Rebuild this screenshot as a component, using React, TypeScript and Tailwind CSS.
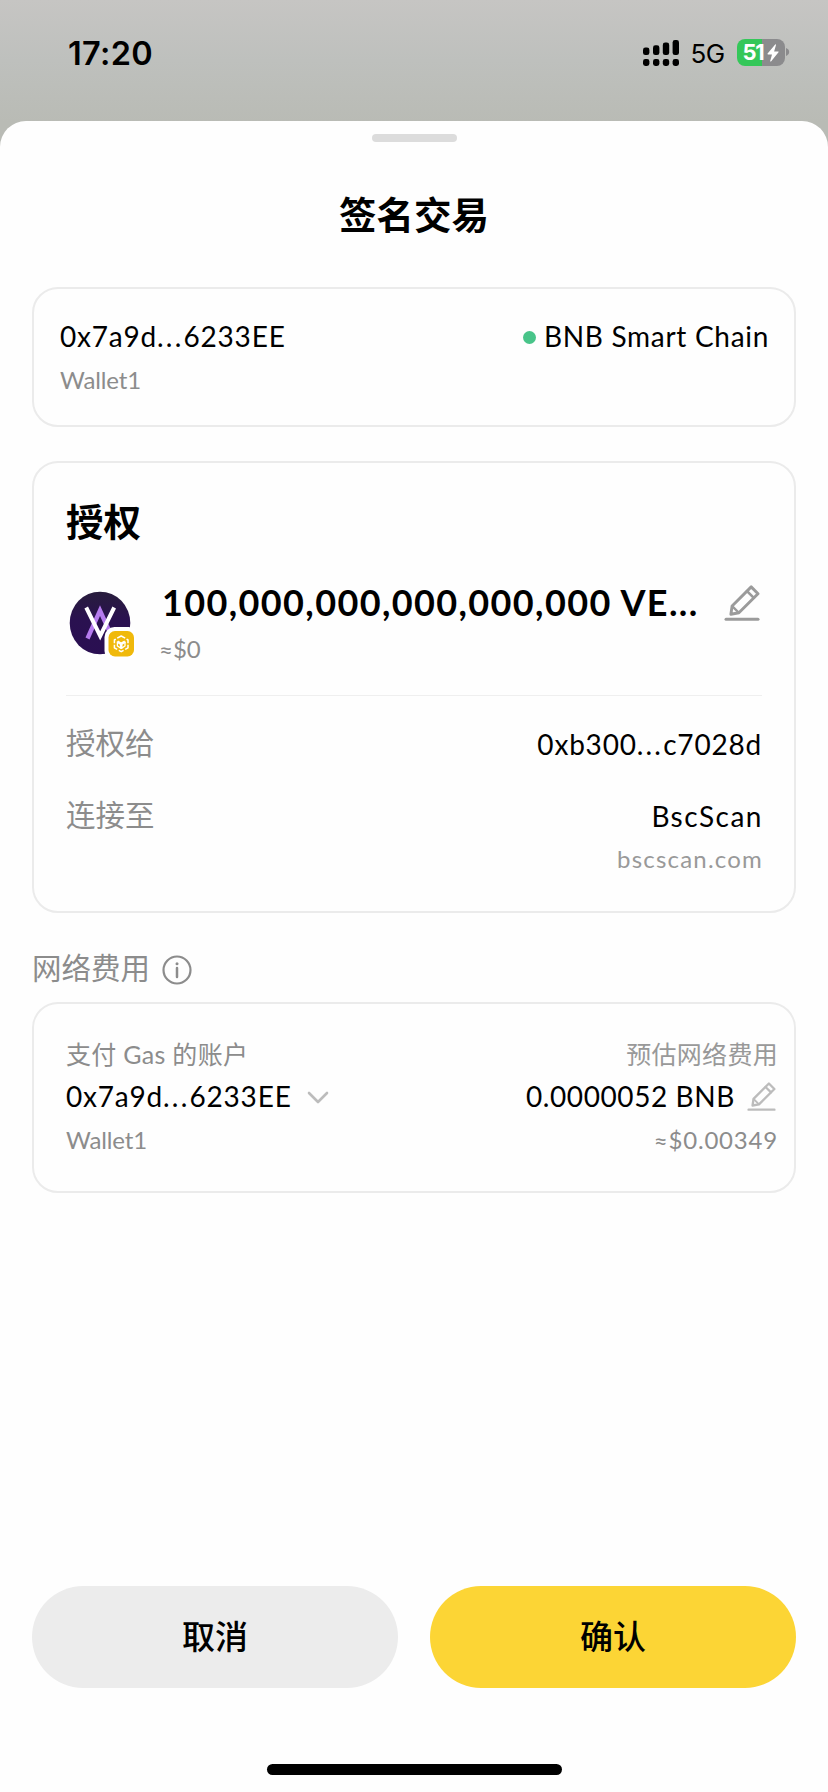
import type { ReactNode } from "react"

function StatusBar() {
  return (
    <div className="flex h-[121px] items-start justify-between bg-gradient-to-b from-[#c6c5c3] via-[#bec0bd] to-[#b9bbb5] pr-[38px] pl-[68px] font-['Inter','Liberation_Sans',sans-serif] text-black">
      <span className="mt-[34px] text-[32.5px] leading-[40px] font-semibold tracking-[0.3px]">17:20</span>
      <div className="mt-[39px] flex items-start">
        <svg width="37" height="27" viewBox="0 0 37 27" className="mr-[11px]">
          <rect x="0" y="8.5" width="6.4" height="7.6" rx="2.4" />
          <rect x="10" y="6.3" width="6.4" height="9.8" rx="2.4" />
          <rect x="19.8" y="3.5" width="6.4" height="12.6" rx="2.4" />
          <rect x="29.6" y="1" width="6.4" height="15.1" rx="2.4" />
          <rect x="0" y="20" width="6.4" height="7" rx="2.4" />
          <rect x="10" y="20" width="6.4" height="7" rx="2.4" />
          <rect x="19.8" y="20" width="6.4" height="7" rx="2.4" />
          <rect x="29.6" y="20" width="6.4" height="7" rx="2.4" />
        </svg>
        <span className="w-[46px] text-[26px] leading-[30px] tracking-[-0.5px]">5G</span>
        <div className="flex h-[27px] w-[48px] items-center justify-center rounded-[8px] bg-[linear-gradient(90deg,#34c759_53%,#8b8b8d_53%)] text-white">
          <span className="text-[22px] leading-[27px] font-bold tracking-[-1.2px]">51</span>
          <svg width="12" height="18" viewBox="0 0 12 18" fill="currentColor" className="ml-[3px]">
            <path d="M8.2 0.4 0.6 9.6c-.3.4-.1.8.4.8h4L3.2 17c-.1.6.4.8.8.4l7.5-9.2c.3-.4.1-.8-.4-.8h-4L9 1c.1-.6-.4-.9-.8-.6z" />
          </svg>
        </div>
        <svg width="4" height="8" viewBox="0 0 4 8" className="mt-[9px] ml-[1.5px]">
          <path d="M0 0c2 .8 3.2 2.2 3.2 4S2 7.2 0 8z" fill="#8b8b8d" />
        </svg>
      </div>
    </div>
  )
}

function PencilIcon({ size, color }: { size: number; color: string }) {
  return (
    <svg width={size} height={size} viewBox="0 0 36 36" fill="none" stroke={color} strokeLinejoin="round" strokeLinecap="round">
      <path d="M27.2 1.9 34 8.7 14.9 27.8 6.9 29.2 8.1 21z" strokeWidth="2.9" />
      <path d="M23 6.1 29.8 12.9" strokeWidth="2.7" />
      <path d="M8.4 21.3 14.6 27.5" strokeWidth="2.4" />
      <path d="M2 34.3H34" strokeWidth="3" />
    </svg>
  )
}

function TokenLogo() {
  return (
    <svg width="68" height="68" viewBox="0 0 68 68" fill="none">
      <defs>
        <linearGradient id="token" x1="0" y1="0" x2="0" y2="1">
          <stop offset="0" stopColor="#281d3c" />
          <stop offset="0.45" stopColor="#2a1150" />
          <stop offset="1" stopColor="#2a0f52" />
        </linearGradient>
      </defs>
      <ellipse cx="32" cy="33" rx="30.3" ry="31.3" fill="url(#token)" />
      <path d="M19.5 48.5 32 20.5 44 47" stroke="#b57bee" strokeWidth="4.4" />
      <path d="M18.2 17.5 32.2 46 46.2 17.5" stroke="#fff" strokeWidth="4" strokeMiterlimit="8" />
      <rect x="36.5" y="37" width="34" height="34" rx="10" fill="#fff" />
      <rect x="40.5" y="41" width="25.5" height="25.5" rx="6.5" fill="#f0b90b" />
      <g stroke="#fff" strokeLinejoin="round">
        <path
          d="M49.2 48.2 53.2 46 57.2 48.2M58.6 49.1 60 50V53.2M60 54.8V57.8L57.2 59.4M55.6 60.4 53.2 61.7 50.8 60.4M49.2 59.4 46.4 57.8V54.8M46.4 53.2V50L47.8 49.1"
          strokeWidth="1.5"
        />
        <path d="M49.4 51.6 53.2 53.9 57 51.6M53.2 53.9V58.6" strokeWidth="2.6" />
        <path d="M49.4 51.6V56L53.2 58.4 57 56V51.6" strokeWidth="1.3" />
      </g>
    </svg>
  )
}

function Card({ className, children }: { className: string; children: ReactNode }) {
  return <div className={`rounded-[26px] border-2 border-[#ebebeb] ${className}`}>{children}</div>
}

function Address({ start, end }: { start: string; end: string }) {
  return (
    <p className="text-[28px] leading-[36px] tracking-[0.8px]">
      {start}
      <span className="tracking-[2.2px]">...</span>
      {end}
    </p>
  )
}

export default function App() {
  return (
    <div className="h-[1792px] w-[828px] bg-[#b9bbb5] font-['Lato','Noto_Sans_CJK_SC',sans-serif] text-black">
      <StatusBar />
      <main className="flex h-[1671px] flex-col rounded-t-[26px] bg-[#fefefe] px-8">
        <div className="mx-auto mt-[13px] h-[8px] w-[85px] rounded-full bg-[#dcdcdc]" />
        <h1 className="mt-[45px] text-center text-[37.5px] leading-[56px] font-semibold">签名交易</h1>

        <Card className="mt-[44px] flex h-[140px] justify-between pt-[29px] pr-[25px] pl-[26px]">
          <div>
            <Address start="0x7a9d" end="6233EE" />
            <p className="mt-[10px] text-[24px] leading-[32px] tracking-[-0.1px] text-[#8c8c8c]">Wallet1</p>
          </div>
          <div className="flex h-[36px] items-center gap-[8px]">
            <span className="mt-[3px] h-[13px] w-[13px] rounded-full bg-[#48c489]" />
            <span className="text-[28px] leading-[36px] tracking-[0.7px]">BNB Smart Chain</span>
          </div>
        </Card>

        <Card className="mt-[34px] h-[452px] px-8 pt-[31px]">
          <h2 className="text-[37.5px] leading-[56px] font-semibold">授权</h2>
          <div className="mt-[33px] flex h-[113px] border-b border-[#efefef]">
            <div className="mt-[7px] ml-[2px] w-[94px]">
              <TokenLogo />
            </div>
            <div className="w-[562px]">
              <p className="-mt-[3px] text-[36px] leading-[44px] font-bold tracking-[1.38px] whitespace-nowrap">
                100,000,000,000,000,000 VE...
              </p>
              <p className="mt-[9px] -ml-[3px] text-[24px] leading-[32px] text-[#8c8c8c]">≈$0</p>
            </div>
            <div className="mt-[2px]">
              <PencilIcon size={36} color="#9b9b9b" />
            </div>
          </div>
          <div className="mt-[29px] flex h-[38px] justify-between">
            <span className="text-[29.5px] leading-[36px] text-[#8c8c8c]">授权给</span>
            <div className="pt-px">
              <Address start="0xb300" end="c7028d" />
            </div>
          </div>
          <div className="mt-[34px] flex justify-between">
            <span className="text-[29.5px] leading-[36px] text-[#8c8c8c]">连接至</span>
            <div className="text-right">
              <p className="-mr-px text-[28px] leading-[38px] tracking-[1.5px]">BscScan</p>
              <p className="mt-[8px] -mr-px text-[24px] leading-[32px] tracking-[1.2px] text-[#999]">bscscan.com</p>
            </div>
          </div>
        </Card>

        <div className="mt-[35px] flex h-[40px] items-center gap-[12px] text-[#8c8c8c]">
          <span className="text-[29.5px] leading-[40px]">网络费用</span>
          <svg width="30" height="30" viewBox="0 0 30 30" fill="none" stroke="currentColor" className="mt-[4px]">
            <circle cx="15" cy="15" r="13.5" strokeWidth="2.2" />
            <path d="M15 13V22" strokeWidth="2.5" strokeLinecap="round" />
            <circle cx="15" cy="8.7" r="1.5" fill="currentColor" stroke="none" />
          </svg>
        </div>

        <Card className="mt-[14px] flex h-[191px] justify-between pt-[33px] pr-[16px] pl-8">
          <div>
            <p className="text-[25px] leading-[34px] tracking-[0.3px] text-[#8c8c8c]">支付 Gas 的账户</p>
            <div className="mt-[7px] flex items-center gap-[15px]">
              <Address start="0x7a9d" end="6233EE" />
              <svg
                width="22"
                height="14"
                viewBox="0 0 22 14"
                fill="none"
                stroke="#bcbcbc"
                strokeWidth="2.6"
                strokeLinecap="round"
                strokeLinejoin="round"
                className="mt-[3px]"
              >
                <path d="M2 2 11 11 20 2" />
              </svg>
            </div>
            <p className="mt-[10px] text-[24px] leading-[32px] tracking-[-0.1px] text-[#8c8c8c]">Wallet1</p>
          </div>
          <div className="text-right">
            <p className="text-[25px] leading-[34px] tracking-[0.3px] text-[#999]">预估网络费用</p>
            <div className="mt-[7px] mr-[2px] flex items-center justify-end gap-[12px]">
              <span className="text-[28px] leading-[36px] tracking-[0.6px]">0.0000052 BNB</span>
              <PencilIcon size={29} color="#bcbcbc" />
            </div>
            <p className="mt-[10px] text-[24px] leading-[32px] tracking-[0.8px] text-[#8c8c8c]">≈$0.00349</p>
          </div>
        </Card>

        <div className="mt-auto grid grid-cols-2 gap-8">
          <button className="h-[102px] rounded-full bg-[#ececec] text-[33px] font-medium">取消</button>
          <button className="h-[102px] rounded-full bg-[#fcd535] text-[33px] font-medium">确认</button>
        </div>
        <div className="mx-auto mt-[76px] mb-[17px] h-[11px] w-[295px] rounded-full bg-black" />
      </main>
    </div>
  )
}
